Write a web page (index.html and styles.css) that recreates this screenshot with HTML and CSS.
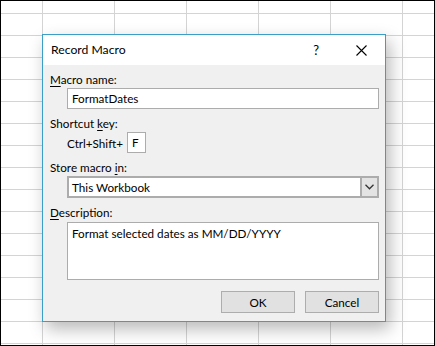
FILE: index.html
```html
<!DOCTYPE html>
<html>
<head>
<meta charset="utf-8">
<link rel="stylesheet" href="styles.css">
</head>
<body>
<div class="frame">
  <div class="dialog">
    <div class="titlebar">
      <span class="title">Record Macro</span>
      <span class="help">?</span>
      <span class="close"><svg width="11" height="11" viewBox="0 0 11 11"><path d="M0.5 0.5 L10.5 10.5 M10.5 0.5 L0.5 10.5" stroke="#000" stroke-width="1.1" fill="none"/></svg></span>
    </div>
    <div class="body">
      <div class="label lbl-first"><u>M</u>acro name:</div>
      <div class="field input">FormatDates</div>
      <div class="label">Shortcut <u>k</u>ey:</div>
      <div class="shortcut">
        <span class="ctrl">Ctrl+Shift+</span>
        <span class="field keybox">F</span>
      </div>
      <div class="label">Store macro <u>i</u>n:</div>
      <div class="combo">
        <span class="combo-text">This Workbook</span>
        <span class="combo-btn"><svg width="9" height="6" viewBox="0 0 9 6"><path d="M0.5 0.8 L4.5 4.8 L8.5 0.8" stroke="#333" stroke-width="1.3" fill="none"/></svg></span>
      </div>
      <div class="label"><u>D</u>escription:</div>
      <div class="field textarea">Format selected dates as MM/DD/YYYY</div>
      <div class="buttons">
        <div class="btn">OK</div>
        <div class="btn">Cancel</div>
      </div>
    </div>
  </div>
</div>
</body>
</html>
```
FILE: styles.css
```css
html, body {
  margin: 0;
  padding: 0;
}
body {
  width: 435px;
  height: 346px;
  font-family: "Lato", "Noto Sans", sans-serif;
  font-size: 11.7px;
  color: #000;
}
.frame {
  box-sizing: border-box;
  width: 435px;
  height: 346px;
  border: 1px solid #000;
  background-color: #fff;
  background-image:
    linear-gradient(to right, #d4d4d4 1px, transparent 1px),
    linear-gradient(to bottom, #d4d4d4 1px, transparent 1px);
  background-size: 72px 22px;
  background-position: 41px 12px;
  padding: 33px 0 0 41px;
  overflow: hidden;
}
.dialog {
  box-sizing: border-box;
  width: 344px;
  height: 288px;
  border: 1px solid #3b9ec6;
  background: #f0f0f0;
  box-shadow: 4px 7px 16px rgba(0, 0, 0, 0.28);
  display: flex;
  flex-direction: column;
}
.titlebar {
  height: 30px;
  background: #fff;
  display: flex;
  align-items: center;
  padding-left: 8px;
  flex-shrink: 0;
}
.title {
  flex: 1;
  font-size: 12.2px;
  line-height: 16px;
}
.help {
  font-size: 13px;
  margin-right: 37px;
  line-height: 16px;
}
.close {
  display: flex;
  margin-right: 18px;
}
.body {
  padding: 6px 6px 8px 7px;
  display: flex;
  flex-direction: column;
}
.label {
  line-height: 16px;
  height: 16px;
  margin-top: 6px;
}
.lbl-first {
  margin-top: 0;
}
.label u {
  text-decoration-thickness: 1px;
  text-underline-offset: 2px;
}
.field {
  box-sizing: border-box;
  background: #fff;
  border: 1px solid #acacac;
  padding-left: 4px;
}
.input {
  margin: 1px 0 0 17px;
  height: 21px;
  line-height: 19px;
}
.shortcut {
  margin: 1px 0 0 17px;
  display: flex;
  align-items: center;
  height: 21px;
}
.ctrl {
  margin-right: 4px;
}
.keybox {
  width: 19px;
  height: 21px;
  line-height: 19px;
  padding-left: 4px;
}
.combo {
  box-sizing: border-box;
  margin: 1px 0 0 17px;
  height: 22px;
  border: 2px solid #acacac;
  background: #fff;
  display: flex;
  align-items: stretch;
}
.combo-text {
  flex: 1;
  padding-left: 3px;
  line-height: 18px;
}
.combo-btn {
  width: 15px;
  background: #e3e3e3;
  border-left: 2px solid #acacac;
  display: flex;
  align-items: center;
  justify-content: center;
}
.textarea {
  margin: 2px 0 0 17px;
  height: 58px;
  padding-top: 1px;
  line-height: 18px;
}
.buttons {
  margin-top: 11px;
  display: flex;
  justify-content: flex-end;
  gap: 10px;
}
.btn {
  box-sizing: border-box;
  width: 74px;
  height: 22px;
  border: 1px solid #adadad;
  background: #e1e1e1;
  display: flex;
  align-items: center;
  justify-content: center;
}
```
